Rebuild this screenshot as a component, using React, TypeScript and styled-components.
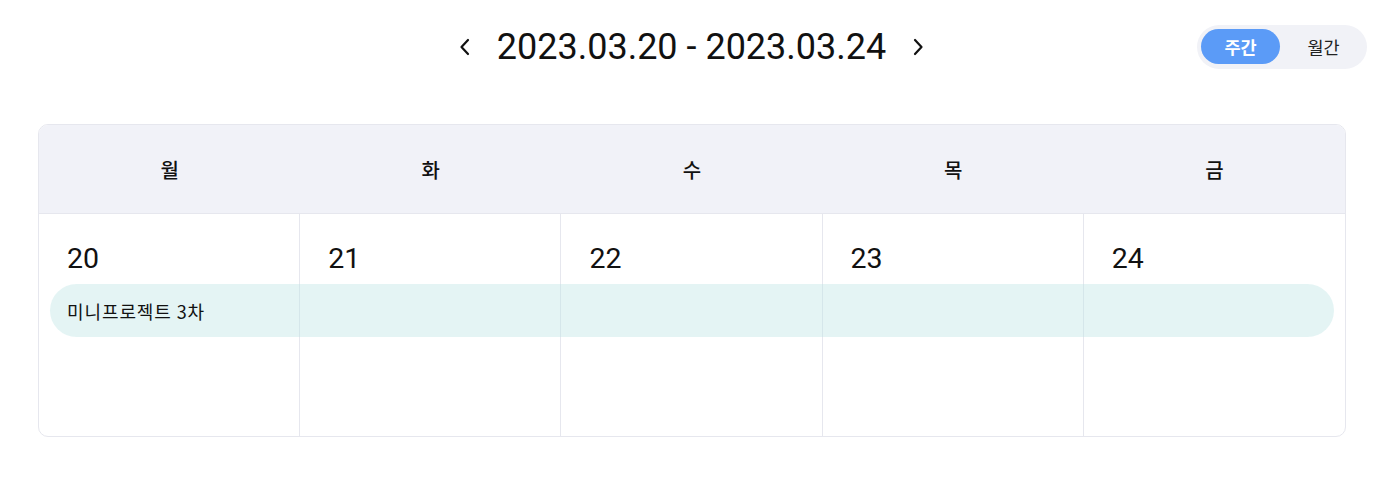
import React, { useState } from "react";
import styled, { createGlobalStyle } from "styled-components";

const Global = createGlobalStyle`
  html, body { margin: 0; padding: 0; background: #ffffff; }
  body { font-family: Roboto, "Noto Sans CJK KR", sans-serif; color: #111111; }
  * { box-sizing: border-box; }
`;

const Page = styled.div`
  width: 1376px;
  height: 478px;
  padding: 24px 9px 0 38px;
  display: flex;
  flex-direction: column;
`;

const TopBar = styled.div`
  display: grid;
  grid-template-columns: 1fr auto 1fr;
  align-items: center;
  height: 45px;
`;

const Nav = styled.div`
  grid-column: 2;
  display: flex;
  align-items: center;
  gap: 20px;
  margin-right: 22px;
`;

const Arrow = styled.button`
  border: none;
  background: transparent;
  padding: 0;
  width: 24px;
  height: 24px;
  display: flex;
  align-items: center;
  justify-content: center;
  cursor: pointer;
  color: #111;
`;

const Title = styled.h1`
  margin: 0;
  font-family: Roboto, sans-serif;
  font-weight: 400;
  font-size: 36px;
  letter-spacing: 0;
  color: #111;
`;

const Toggle = styled.div`
  grid-column: 3;
  justify-self: end;
  display: flex;
  align-items: center;
  gap: 4px;
  height: 44px;
  padding: 4px;
  border-radius: 22px;
  background: #f1f2f7;
  width: 170px;
`;

const ToggleBtn = styled.button<{ $active?: boolean }>`
  border: none;
  height: 35px;
  width: 80px;
  border-radius: 18px;
  font-family: "Noto Sans CJK KR", sans-serif;
  font-size: 17.5px;
  font-weight: ${(p) => (p.$active ? 700 : 400)};
  color: ${(p) => (p.$active ? "#ffffff" : "#222222")};
  background: ${(p) => (p.$active ? "#5b9bf7" : "transparent")};
  cursor: pointer;
  padding: 0;
`;

const Calendar = styled.div`
  margin-top: 55px;
  width: 1308px;
  border: 1px solid #e6e7ee;
  border-radius: 10px;
  overflow: hidden;
`;

const HeaderRow = styled.div`
  display: grid;
  grid-template-columns: repeat(5, 1fr);
  height: 89px;
  background: #f1f2f8;
  border-bottom: 1px solid #e6e7ee;
`;

const HeadCell = styled.div`
  display: flex;
  align-items: center;
  justify-content: center;
  font-family: "Noto Sans CJK KR", sans-serif;
  font-size: 20px;
  font-weight: 500;
  color: #111;
`;

const Body = styled.div`
  position: relative;
  display: grid;
  grid-template-columns: repeat(5, 1fr);
  height: 222px;
`;

const DayCell = styled.div<{ $last?: boolean }>`
  border-right: ${(p) => (p.$last ? "none" : "1px solid #e6e7ee")};
  padding: 25px 0 0 28px;
`;

const DayNum = styled.div`
  font-family: Roboto, sans-serif;
  font-size: 28.5px;
  line-height: 40px;
  color: #111;
`;

const EventBar = styled.div`
  position: absolute;
  left: 11px;
  right: 11px;
  top: 70px;
  height: 53px;
  border-radius: 27px;
  background: rgba(190, 229, 229, 0.42);
  display: flex;
  align-items: center;
  padding-left: 17px;
  font-family: "Noto Sans CJK KR", Roboto, sans-serif;
  font-size: 18px;
  letter-spacing: 0.9px;
  color: #111;
`;

const days = [
  { name: "월", num: 20 },
  { name: "화", num: 21 },
  { name: "수", num: 22 },
  { name: "목", num: 23 },
  { name: "금", num: 24 },
];

export default function App() {
  const [mode, setMode] = useState<"week" | "month">("week");
  return (
    <>
      <Global />
      <Page>
        <TopBar>
          <Nav>
            <Arrow aria-label="이전">
              <svg width="14" height="20" viewBox="0 0 14 20" fill="none">
                <path d="M10 3 L3.5 10 L10 17" stroke="#111" strokeWidth="2.2" strokeLinecap="round" strokeLinejoin="round" />
              </svg>
            </Arrow>
            <Title>2023.03.20 - 2023.03.24</Title>
            <Arrow aria-label="다음">
              <svg width="14" height="20" viewBox="0 0 14 20" fill="none">
                <path d="M4 3 L10.5 10 L4 17" stroke="#111" strokeWidth="2.2" strokeLinecap="round" strokeLinejoin="round" />
              </svg>
            </Arrow>
          </Nav>
          <Toggle>
            <ToggleBtn $active={mode === "week"} onClick={() => setMode("week")}>주간</ToggleBtn>
            <ToggleBtn $active={mode === "month"} onClick={() => setMode("month")}>월간</ToggleBtn>
          </Toggle>
        </TopBar>
        <Calendar>
          <HeaderRow>
            {days.map((d) => (
              <HeadCell key={d.name}>{d.name}</HeadCell>
            ))}
          </HeaderRow>
          <Body>
            {days.map((d, i) => (
              <DayCell key={d.num} $last={i === days.length - 1}>
                <DayNum>{d.num}</DayNum>
              </DayCell>
            ))}
            <EventBar>미니프로젝트 3차</EventBar>
          </Body>
        </Calendar>
      </Page>
    </>
  );
}
